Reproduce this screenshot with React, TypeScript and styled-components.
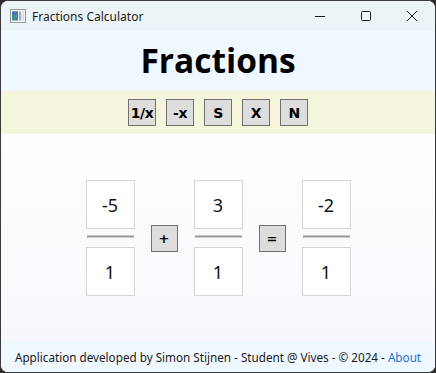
import { FC } from "react";
import styled, { createGlobalStyle } from "styled-components";

const GlobalStyle = createGlobalStyle`
  html, body {
    margin: 0;
    padding: 0;
    background: #2d2d2d;
  }
  body {
    font-family: "Noto Sans", "Open Sans", sans-serif;
  }
`;

const fractions = [
  { num: "-5", den: "1" },
  { num: "3", den: "1" },
  { num: "-2", den: "1" },
];

const tools = ["1/x", "-x", "S", "X", "N"];

const AppIcon: FC = () => (
  <svg width="16" height="14" viewBox="0 0 16 14">
    <rect x="0.5" y="0.5" width="15" height="13" fill="#f4f4f4" stroke="#9a9a9a" />
    <rect x="2" y="2.5" width="6" height="9" fill="#3f8f8a" />
    <rect x="2" y="2.5" width="6" height="3" fill="#4a76b8" />
    <rect x="9" y="2.5" width="2" height="9" fill="#8fb0c8" />
    <rect x="12" y="2.5" width="2" height="9" fill="#dcdcdc" />
  </svg>
);

export default function App() {
  return (
    <>
      <GlobalStyle />
      <Window>
        <TitleBar>
          <AppIcon />
          <TitleText>Fractions Calculator</TitleText>
          <Controls>
            <ControlButton>
              <svg width="12" height="12" viewBox="0 0 12 12">
                <path d="M1 6.5h10" stroke="#1a1a1a" strokeWidth="1" />
              </svg>
            </ControlButton>
            <ControlButton>
              <svg width="12" height="12" viewBox="0 0 12 12">
                <rect x="1.5" y="1.5" width="9" height="9" rx="1" fill="none" stroke="#1a1a1a" />
              </svg>
            </ControlButton>
            <ControlButton>
              <svg width="12" height="12" viewBox="0 0 12 12">
                <path d="M1 1l10 10M11 1L1 11" stroke="#1a1a1a" strokeWidth="1" />
              </svg>
            </ControlButton>
          </Controls>
        </TitleBar>
        <Header>
          <Title>Fractions</Title>
        </Header>
        <Toolbar>
          {tools.map((t) => (
            <ToolButton key={t}>{t}</ToolButton>
          ))}
        </Toolbar>
        <Main>
          <Equation>
            {fractions.map((f, i) => (
              <Group key={i}>
                {i > 0 && <OpButton>{i === 1 ? "+" : "="}</OpButton>}
                <Fraction>
                  <NumberBox>{f.num}</NumberBox>
                  <Bar />
                  <NumberBox>{f.den}</NumberBox>
                </Fraction>
              </Group>
            ))}
          </Equation>
        </Main>
        <Footer>
          Application developed by Simon Stijnen - Student @ Vives - © 2024 - <Link>About</Link>
        </Footer>
      </Window>
    </>
  );
}

const Window = styled.div`
  box-sizing: border-box;
  width: 436px;
  height: 373px;
  border: 1px solid #3a3a3a;
  border-radius: 8px;
  overflow: hidden;
  display: flex;
  flex-direction: column;
  background: #eef5f8;
`;
const TitleBar = styled.div`
  height: 30px;
  flex: none;
  display: flex;
  align-items: center;
  padding-left: 9px;
  background: #edf4f7;
`;
const TitleText = styled.span`
  margin-left: 6px;
  font-size: 12px;
  color: #1a1a1a;
  font-family: "Noto Sans", sans-serif;
`;
const Controls = styled.div`
  margin-left: auto;
  display: flex;
  height: 100%;
`;
const ControlButton = styled.div`
  width: 46px;
  height: 100%;
  display: flex;
  align-items: center;
  justify-content: center;
`;
const Header = styled.div`
  height: 60px;
  flex: none;
  display: flex;
  align-items: center;
  justify-content: center;
  background: #f0f8ff;
`;
const Title = styled.h1`
  margin: 0;
  font-family: "Open Sans", sans-serif;
  font-weight: 700;
  font-size: 33.5px;
  color: #000;
  line-height: 1;
`;
const Toolbar = styled.div`
  height: 43px;
  flex: none;
  display: flex;
  align-items: center;
  justify-content: center;
  gap: 10px;
  background: #f5f5dc;
`;
const ToolButton = styled.div`
  box-sizing: border-box;
  width: 28px;
  height: 27px;
  border: 1px solid #707070;
  background: #dddddd;
  display: flex;
  align-items: center;
  justify-content: center;
  font-family: "DejaVu Sans", sans-serif;
  font-weight: 700;
  font-size: 14px;
  letter-spacing: -0.5px;
  color: #000;
`;
const Main = styled.div`
  flex: 1;
  display: flex;
  align-items: center;
  justify-content: center;
  background: linear-gradient(#ffffff, #f7f7fe);
`;
const Equation = styled.div`
  display: flex;
  align-items: center;
  gap: 16px;
`;
const Group = styled.div`
  display: flex;
  align-items: center;
  gap: 16px;
`;
const Fraction = styled.div`
  display: flex;
  flex-direction: column;
  align-items: center;
`;
const NumberBox = styled.div`
  box-sizing: border-box;
  width: 49px;
  height: 49px;
  border: 1px solid #d4d4d4;
  background: #fff;
  display: flex;
  align-items: center;
  justify-content: center;
  font-family: "Noto Sans", sans-serif;
  font-size: 18px;
  color: #111;
`;
const Bar = styled.div`
  width: 47px;
  height: 3px;
  margin: 6px 0 9px;
  background: #959595;
  border-top: 1px solid #c8c8c8;
  border-bottom: 1px solid #d0d0d0;
  box-sizing: border-box;
`;
const OpButton = styled.div`
  box-sizing: border-box;
  width: 27px;
  height: 27px;
  border: 1px solid #707070;
  background: #dddddd;
  display: flex;
  align-items: center;
  justify-content: center;
  font-family: "DejaVu Sans", sans-serif;
  font-weight: 700;
  font-size: 13px;
  color: #000;
`;
const Footer = styled.div`
  height: 30px;
  flex: none;
  display: flex;
  align-items: center;
  justify-content: center;
  background: #f0f8ff;
  font-family: "Noto Sans", sans-serif;
  font-size: 11.7px;
  color: #1a1a1a;
  white-space: pre;
`;
const Link = styled.span`
  color: #1f6fd6;
`;
